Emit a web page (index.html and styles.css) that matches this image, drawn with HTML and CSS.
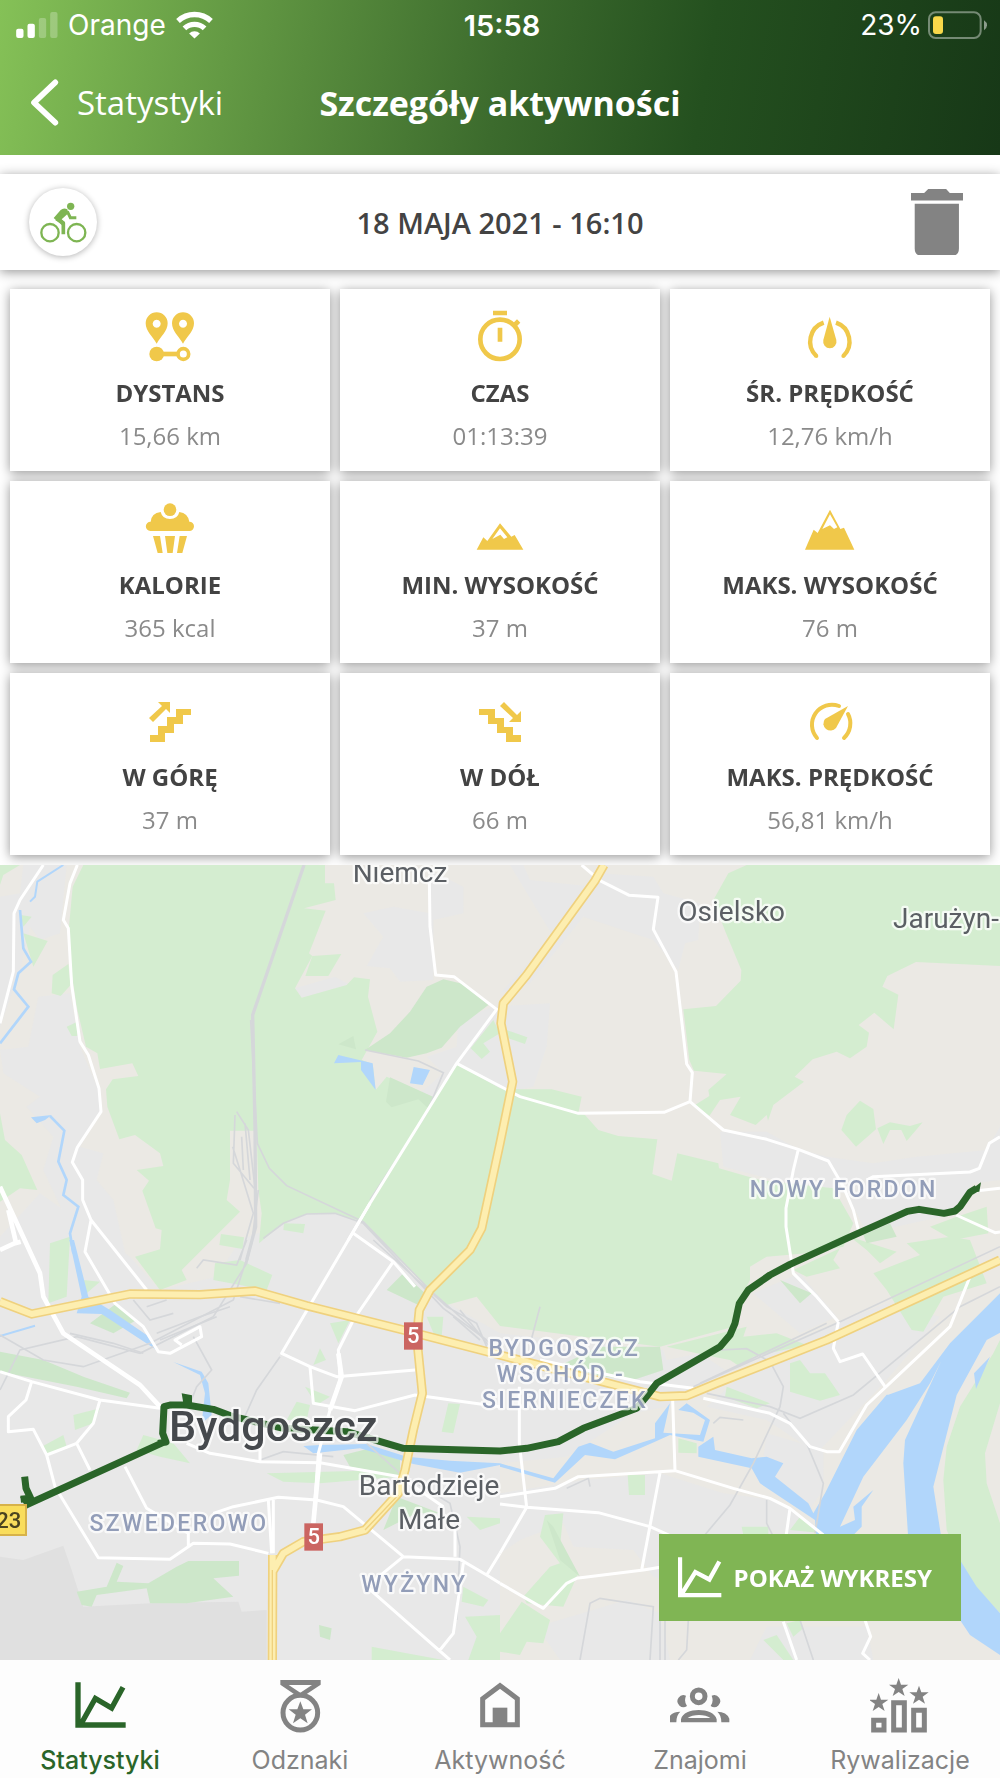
FILE: index.html
```html
<!DOCTYPE html>
<html lang="pl">
<head>
	<meta charset="UTF-8">
	<meta name="viewport" content="width=device-width, initial-scale=1">
	<title>Szczegóły aktywności</title>
	<link rel="stylesheet" href="styles.css">
</head>
<body>
	<header class="header">
		<div class="status">
			<div class="status_left">
				<svg class="signal" viewBox="48 33 125 78"><g fill="#fff"><rect x="48" y="83" width="22" height="28" rx="6"/><rect x="82" y="68" width="22" height="43" rx="6"/><g opacity=".25"><rect x="116" y="51" width="22" height="60" rx="6"/><rect x="150" y="33" width="22" height="78" rx="6"/></g></g></svg>
				<span>Orange</span>
				<svg class="wifi" viewBox="532 30 110 82"><g fill="none" stroke="#fff" stroke-width="16"><path d="M538 59A72 72 0 0 1 636 59"/><path d="M557 81A44 44 0 0 1 617 81"/></g><path fill="#fff" d="M587 111L571 96A23 23 0 0 1 603 96Z"/></svg>
			</div>
			<div class="status_time">15:58</div>
			<div class="status_right">
				<span>23%</span>
				<svg class="battery" viewBox="1284 30 180 84"><rect x="1287" y="34" width="155" height="77" rx="20" fill="none" stroke="#fff" stroke-opacity=".4" stroke-width="6"/><rect x="1299" y="46" width="30" height="53" rx="9" fill="#f8d84a"/><path d="M1452 58Q1461 64 1461 73T1452 88Z" fill="#fff" opacity=".5"/></svg>
			</div>
		</div>
		<div class="navbar">
			<a class="back" href="#">
				<svg class="back_icon" viewBox="90 234 87 141"><path d="M166 244L102 305L166 365" fill="none" stroke="#fff" stroke-width="17" stroke-linecap="round" stroke-linejoin="round"/></svg>
				<span>Statystyki</span>
			</a>
			<h1 class="title">Szczegóły aktywności</h1>
		</div>
	</header>

	<main class="main">
		<div class="summary">
			<div class="date_bar">
				<div class="sport">
					<svg viewBox="86 564 204 204"><g fill="none" stroke="#7eb553"><circle cx="149" cy="698" r="26" stroke-width="7"/><circle cx="229" cy="698" r="26" stroke-width="7"/><path d="M189 703V669L168 656" stroke-width="11" stroke-linejoin="round"/><path d="M201 634L210 653H228" stroke-width="9"/></g><path fill="#7eb553" d="M160 654L181 630Q190 622 201 628L204 640L184 658L194 667L185 676Z"/><circle cx="211" cy="619" r="11" fill="#7eb553"/></svg>
				</div>
				<h2 class="date">18 MAJA 2021 - 16:10</h2>
				<button class="delete" type="button" aria-label="Usuń">
					<svg viewBox="1235 568 154 198"><path fill="#838383" d="M1235 580H1274L1286 568H1339L1350 580H1389V602H1235ZM1246 612H1377V744Q1377 766 1355 766H1268Q1246 766 1246 744Z"/></svg>
				</button>
			</div>

			<!-- statystyki aktywności -->
			<ul class="stats">
				<li class="card">
					<svg class="card_icon" viewBox="429 94 162 162"><path fill-rule="evenodd" d="M470 195C458 173 437 158 437 134A33 33 0 0 1 503 134C503 158 482 173 470 195ZM470 123a12 12 0 1 0 .1 0ZM549 195C537 173 516 158 516 134A33 33 0 0 1 582 134C582 158 561 173 549 195ZM549 123a12 12 0 1 0 .1 0Z"/><circle cx="470" cy="226" r="22"/><path d="M485 219H535V233H485Z"/><circle cx="550" cy="226" r="16" fill="#fff" stroke="#f0c84a" stroke-width="11"/></svg>
					<h3>DYSTANS</h3>
					<p>15,66 km</p>
				</li>
				<li class="card">
					<svg class="card_icon" viewBox="1419 94 162 162"><circle cx="1500" cy="182" r="59" fill="none" stroke="#f0c84a" stroke-width="14"/><path d="M1479 96H1521V110H1479ZM1493 147H1507V189H1493ZM1539 134L1551 122L1561 132L1549 144Z"/></svg>
					<h3>CZAS</h3>
					<p>01:13:39</p>
				</li>
				<li class="card">
					<svg class="card_icon" viewBox="909 94 162 162"><g fill="none" stroke="#f0c84a" stroke-width="13"><path d="M949 232A60 60 0 0 1 971 132M1008 132A60 60 0 0 1 1030 232"/></g><circle cx="949" cy="232" r="6"/><circle cx="1030" cy="232" r="6"/><path d="M989 114L1009 184A20 20 0 1 1 970 184Z"/></svg>
					<h3>ŚR. PRĘDKOŚĆ</h3>
					<p>12,76 km/h</p>
				</li>
				<li class="card">
					<svg class="card_icon" viewBox="429 669 162 162"><circle cx="510" cy="692" r="19"/><path d="M451 756A14 14 0 0 1 452 728Q454 703 482 699Q487 720 510 720T538 699Q564 703 568 728A14 14 0 0 1 568 756ZM459 771H480L488 822H473ZM495 771H525L518 822H502ZM539 771H561L547 822H531Z"/></svg>
					<h3>KALORIE</h3>
					<p>365 kcal</p>
				</li>
				<li class="card">
					<svg class="card_icon" viewBox="1419 669 162 162"><path fill-rule="evenodd" d="M1430 812L1450 775L1462 786L1500 733L1534 773L1544 768L1570 812ZM1477 780L1501 767L1512 780L1522 775L1500 748Z"/></svg>
					<h3>MIN. WYSOKOŚĆ</h3>
					<p>37 m</p>
				</li>
				<li class="card">
					<svg class="card_icon" viewBox="909 669 162 162"><path fill-rule="evenodd" d="M915 812L941 752L953 762L990 692L1021 750L1032 746L1063 812ZM967 750L990 739L1002 750L1012 745L990 706Z"/></svg>
					<h3>MAKS. WYSOKOŚĆ</h3>
					<p>76 m</p>
				</li>
				<li class="card">
					<svg class="card_icon" viewBox="143 694 54 54"><path d="M150 735H158V726H167V717H176V709H191V715H183V724H174V733H165V742H150ZM158 702H170V713L166 709L153 722L149 718L162 706Z"/></svg>
					<h3>W GÓRĘ</h3>
					<p>37 m</p>
				</li>
				<li class="card">
					<svg class="card_icon" viewBox="473 694 54 54"><path d="M479 709H495V718H504V727H513V735H521V742H506V733H497V724H488V715H479ZM504 702L517 715L521 711V722H509L513 718L500 706Z"/></svg>
					<h3>W DÓŁ</h3>
					<p>66 m</p>
				</li>
				<li class="card">
					<svg class="card_icon" viewBox="803 694 54 54"><path d="M817 738A20 20 0 0 1 839 706M848 714A20 20 0 0 1 844 738" fill="none" stroke="#f0c84a" stroke-width="4" stroke-linecap="round"/><path d="M848 706L836 728A7 7 0 1 1 825 719Z"/></svg>
					<h3>MAKS. PRĘDKOŚĆ</h3>
					<p>56,81 km/h</p>
				</li>
			</ul>
		</div>

		<!-- mapa trasy -->
		<div class="map">
			<svg class="map_svg" viewBox="0 15 3000 2385" preserveAspectRatio="xMidYMid slice" role="img" aria-label="Mapa trasy">
				<rect width="3000" height="2400" fill="#ebe9e4"/>
				<!-- zabudowa -->
				<g fill="#e8e8e8">
					<path d="M0 110L60 100L70 15H200L180 220L120 240L90 200L60 330L0 500ZM115 410L210 400L240 560L300 700L300 760L240 860L310 880L290 960L340 1020L380 1200H170L200 1080L130 930L160 830L80 740L120 710L10 640L0 570L85 560Z"/>
					<path d="M1090 160L1180 140L1290 160V30L1390 80L1390 160L1300 180V360L1200 365L1170 325L1100 318L1150 230ZM885 385L1005 350L1050 375L905 413ZM1375 480L1480 440L1650 430L1640 560L1600 680L1500 700L1300 720L1260 700L1330 640L1280 590L1370 560ZM1530 15H1570L1590 60L1780 80L1790 40L1960 50L1990 100L2100 130L2095 240L2055 250L2035 330L1960 240L1930 230L1750 170L1590 370L1500 400L1660 230Z"/>
					<path d="M2160 815H2300L2390 865L2480 890L2620 910L2750 890L2960 870L3000 800V960L2920 970L2870 1060L2600 1120L2540 1000L2400 980L2170 920Z"/>
					<path d="M0 1130L120 1000L390 1190L480 1290L650 1250L720 1140L800 1110L920 1062H1030L1100 1090L1290 1300L1500 1420L1990 1470L2000 1500L2100 1480L2220 1560L2000 1640L1900 1660L1700 1790L1500 1810V2400H0Z"/>
					<path d="M1500 1900L1750 1860L1980 1840L2170 1900L2320 1920L2440 1990V2100L2250 2050L2060 2180L1960 2150L1900 2070L1720 2060L1690 1990L1560 2040L1500 2080ZM2300 1720L2470 1770L2470 1890L2420 1960L2280 1870ZM2310 1470L2660 1330L2820 1370L2660 1560L2450 1780L2300 1680L2120 1640ZM2260 1300L2400 1240L2510 1370L2400 1420ZM1610 2300L1880 2220L1980 2260L2010 2400H1680ZM2300 2300H2600L2620 2400H2250Z"/>
				</g>
				<path fill="#e0e0e0" d="M0 2090L70 2100L190 2057L215 2130L250 2240L480 2228L715 2225L725 2255L800 2250V2400H0Z"/>
				<!-- lasy -->
				<g fill="#d4edd0">
					<path d="M250 15H975V70H1002L1007 120L912 145L977 152L927 280L937 288L885 385L905 413L1040 375L1062 352L1110 358L1104 410L1132 515L1085 600L1118 612L1127 690L1160 650L1300 712L1370 612L1500 685L1560 688H1655L1745 710L1735 760L1755 765L1795 810L1855 828L1972 838L1957 942L2015 962L2032 880L2155 910L2157 925L2280 960L2500 985L2560 1090L2530 1160L2420 1180L2300 1190L2250 1220L2250 1260L2215 1330L2200 1400L1980 1460L1500 1398L1430 1310L1340 1335L1290 1290L1090 1085L1000 1060L920 1062L850 1090L777 1150L785 1060L775 990L770 812H690V960L680 1020L720 1055L575 1200L545 1230L560 1260L480 1290L405 1190L480 1168L485 1110L467 1105L427 992L447 962L410 930L490 918L480 880L405 825L358 838L322 740L318 688L338 658L415 648L397 610L300 627L292 580L258 560L230 440L215 340L207 200L218 80Z"/>
					<path d="M2240 15H3000V318L2748 306L2662 348L2647 380L2695 404L2681 508L2623 458L2576 495L2607 518L2600 560L2550 595L2510 575L2438 598L2384 650L2412 665L2320 735L2304 782L2300 765L2267 795L2190 765L2222 710L2160 720L2128 768L2085 735L2128 708L2125 690L2180 642L2082 632L2068 600L2050 448L2148 438L2222 362L2224 330L2175 212L2140 120L2185 40Z"/>
					<path d="M937 288L1024 282L985 348H916ZM2524 810L2540 765L2580 722L2620 747L2628 808L2568 860ZM2632 805L2670 787L2730 798L2768 787L2720 843L2704 810H2670L2650 852ZM0 15H60L10 45L0 75ZM70 220L143 243L100 320ZM62 165L95 170L70 200ZM205 312L212 375L182 408L155 400L158 345ZM200 500L232 485V528H215ZM0 760L15 840L65 885L112 990L60 985L0 1025ZM1412 565L1480 480L1500 520L1450 550L1470 575L1445 597ZM1520 510L1582 532L1575 552L1525 535ZM852 1090L915 1092L910 1120L850 1110ZM663 1122L732 1132L728 1167L658 1155Z"/>
					<path d="M150 1150L210 1130L200 1310L145 1330ZM645 1210L720 1200L817 1245L800 1290L640 1260ZM250 1260L300 1265L260 1300ZM990 1390L1050 1380L1015 1450ZM960 1465L978 1500L940 1515ZM915 1580L990 1610L950 1635ZM1345 1630L1380 1632L1360 1720L1325 1715ZM890 1625L930 1635L920 1680H860ZM220 1665L300 1645L280 1690L225 1710ZM125 1760L190 1725L200 1760L140 1790ZM430 1725L520 1750L570 1810L480 1790L410 1770ZM800 1840L1180 1830L1200 1850L960 1870L850 1865ZM1280 1370H1330L1325 1430H1305ZM1500 1975L1400 1970L1440 2010L1500 1990ZM1115 2360L1330 2400H1115ZM1395 2270L1500 2265V2400H1405L1430 2330ZM1390 2180L1465 2220L1450 2240L1385 2225Z"/>
					<path d="M2000 1460L2240 1400L2230 1430L2330 1420L2420 1455L2260 1490L2220 1520L2190 1500L2140 1490ZM2620 1240L2760 1185L2720 1150L2850 1130L2910 1140L2960 1270L2830 1310L2770 1415L2735 1410L2660 1290ZM2370 1510L2400 1500L2430 1540L2475 1540L2520 1605L2460 1622L2370 1595ZM2180 1580L2310 1630L2270 1645L2175 1610ZM2380 1230L2520 1165L2500 1200L2520 1225L2420 1250ZM2035 1735L2090 1750V1780L2035 1778ZM1883 1845H1935V1905H1887ZM2225 2000H2305V2025H2230ZM2370 2010L2400 1970L2470 2020ZM1635 1965L1690 1960L1680 2060L1735 2140L1690 2240L1580 2230L1570 2210L1650 2120L1680 2110L1620 2030ZM1500 2320L1565 2225L1650 2280L1630 2350L1580 2345L1560 2385L1500 2375ZM2290 2340L2330 2325L2380 2400H2350ZM2360 2290L2400 2280L2410 2305L2380 2330ZM2550 1130L2690 1175L2640 1210L2600 1170ZM2870 1070L2960 1040L2965 1120L2860 1140L2790 1100Z"/>
					<path d="M3000 1440V1630L2955 1780L2960 1870L3000 1990V2260L2900 2150L2840 2010L2830 1860L2840 1760L2880 1640L2980 1480Z"/>
				</g>
				<g fill="#cde7ca">
					<path d="M1095 570L1170 520L1230 455L1280 380L1330 358L1390 372L1465 435L1380 500L1325 563L1280 580L1220 593ZM1170 652L1302 712L1285 745L1255 718L1175 742L1158 725ZM1015 553L1060 528L1068 568Z"/>
					<path d="M0 1475L130 1500L250 1550L390 1598L380 1615L230 1580L0 1535ZM1160 1290L1210 1240L1275 1300L1255 1335ZM230 2195L320 2180L350 2108L370 2118L350 2165L445 2170L530 2120L565 2103H717V2147L640 2155L700 2210L560 2230H450L440 2185L290 2205L275 2240L245 2235ZM1030 1785L1110 1765L1200 1800V1850L1050 1820ZM1190 1910L1320 1960L1250 1960L1150 2010ZM957 2295L995 2305L990 2340L960 2330ZM270 1390L350 1330L410 1380L340 1420Z"/>
					<path d="M1800 1460L1980 1460L1990 1530L1900 1560L1650 1530ZM2340 1260L2435 1300L2400 1330ZM1640 1980L1660 2000L1740 2150L1680 2100ZM2590 1125L2670 1090L2690 1130L2600 1150Z"/>
				</g>
				<!-- woda -->
				<g fill="#b1d6fb">
					<path d="M3000 1300L2850 1450L2760 1570L2665 1604L2660 1604L2570 1710L2475 1900L2440 1960L2425 1930L2325 1850L2350 1810L2300 1790L2255 1795L2145 1770L2140 1730L2095 1760V1790L2255 1825L2280 1870L2445 1980L2450 2040H2545L2585 2000V1940L2620 1890L2560 1940L2565 1980L2520 2000L2590 1850L2720 1680L2790 1570L2825 1500L2715 1740L2710 1810L2725 2040H2825L2800 1880L2870 1605L2960 1440L3000 1418ZM2730 1617L2610 1790L2680 1700ZM2970 1490L2922 1540L2928 1587ZM2880 2100L2930 2180L3000 2260V2385L2910 2325L2870 2265Z"/>
					<path d="M2010 1630L1965 1690V1735L1840 1775L1770 1748L1735 1760L1660 1855L1500 1810V1820L1665 1868L1755 1785L1845 1798L1965 1745L2010 1725L2110 1745L2130 1680L2060 1630L2035 1650L2080 1658L2115 1680L2100 1725L1990 1718Z"/>
					<path d="M910 1758L940 1780L1080 1765L1240 1812L1380 1838L1500 1815V1810L1350 1802L1220 1790L1100 1752L960 1755ZM1002 610L1015 585L1118 610L1127 690L1083 630V606ZM1241 621L1290 630L1268 675L1230 670ZM93 772L155 765L135 780L110 790ZM208 1140L245 1310L230 1360L305 1362L470 1470L440 1425L330 1350L265 1310L222 1140ZM520 1506L600 1545L615 1600L605 1690L635 1665L625 1570L605 1535Z"/>
				</g>
				<g fill="none" stroke="#b1d6fb">
					<path stroke-width="6" d="M190 15L112 65L105 110L90 125M0 1428L105 1397"/>
					<path stroke-width="8" d="M60 150L70 265L93 305L55 340L42 388L85 440L0 550M150 768L193 812L175 905L200 960L190 1005L235 1040L210 1120L220 1180"/>
				</g>
				<!-- tory kolejowe -->
				<g fill="none" stroke="#d5d7da" stroke-width="5">
					<path stroke-width="10" d="M912 15L758 465L765 800L767 1100L740 1200"/>
					<path d="M752 480L772 850L808 925L860 977L1090 1085L1290 1290L1470 1450M705 765L700 910L762 985M710 755L745 810L765 985M725 830L730 930M735 790L750 960M698 860L720 930L760 1060L720 1200M775 990L755 1150L700 1320L450 1450L250 1520L130 1500L0 1425M765 1100L740 1210L640 1370L420 1480L230 1430L60 1470L0 1590M790 1135L850 1090L920 1062L1005 1060L1090 1090L1330 1345L1460 1440M1120 1140L1340 1340L1430 1390L1460 1460M590 1225L610 1200L710 1215L740 1140M1095 570L1255 603L1330 638L1280 760L1110 1020M840 1490L770 1590L730 1680M580 1430L635 1530L590 1580L570 1630M780 1800L850 1775L1000 1790"/>
					<path d="M400 1320L450 1380L520 1360M440 1340L500 1320M470 1420L600 1370L690 1340M480 1440L650 1370M210 1420L340 1450L430 1480M720 1310L840 1330M1360 1370L1440 1440M1380 1350L1465 1455"/>
					<path d="M1620 1340L1595 1435M2080 1580L2520 1385L3000 1160M2100 1570L2480 1390M2120 1600L2310 1640L2400 1675L2560 1605L2880 1340L3000 1280M2160 1470L2240 1466L2310 1505L2350 1580L2340 1640L2260 1810L2190 1935L2110 2030M2350 1660L2420 1750L2470 1870L2445 2020M2300 1920V1990L2320 2030M2140 1690L2160 1672L2230 1680M1740 2400L1770 2230L1800 2215L1960 2240L1950 2400M1980 2280V2400M1995 2280V2400M2065 2280L2060 2370L2035 2400M2400 2280L2440 2400M1700 1885L1765 1855L1770 1880M1100 1750L1200 1840L1350 1930L1380 2060L1370 2280"/>
				</g>
				<!-- drogi lokalne -->
				<g fill="none" stroke="#fff" stroke-width="9" stroke-linejoin="round">
					<path d="M130 15L60 120L42 160L40 335L0 490M232 15L210 70L190 180L205 205L215 375L240 545L265 585L297 685L303 755L232 862L217 907L248 960V1020L273 1080L440 1290M273 1080L255 1175L345 1330L430 1400L475 1475L510 1480L605 1430L600 1400L525 1440L545 1455M1288 60L1290 200L1307 345L1362 350L1490 448L1370 610L1110 1030L845 1480L930 1520L1010 1550L1245 1530M1370 610L1560 710L1735 760L1992 757L2070 725L2170 810L2300 838L2395 868L2485 903L2530 980L2560 1050L2575 1110M2395 868L2380 930L2358 1045V1100L2380 1240L2450 1310L2515 1385M1745 15L1800 62L1888 106L1974 112L1960 208L2028 335L2060 612L2077 638L2070 725M2600 960L2620 950L2910 936L2938 925L2968 850L3000 830M2925 993L3000 985M2868 1065L2985 1118L3000 1116"/>
					<path d="M0 1535L95 1565L300 1620L480 1645M95 1565L78 1620L25 1670V1715L100 1708L140 1785L230 1750L280 1690L300 1620M140 1785L165 1880L295 2093L510 2098L580 2050L690 2052L805 2080M230 1750L270 1830M375 1820L440 1945L565 2020V2060M1045 1140L1110 1030M1180 1205L1060 1380L1015 1470L1020 1560L990 1650L955 1780L940 1990M1060 1120L1180 1205L1245 1280M930 1520L940 1630L1065 1652L1245 1605L1500 1640M560 1750L630 1780L780 1805L960 1808L1200 1850L1330 1940M780 1805V1760M640 1960L700 1940L835 1912L950 1920L1030 1940L1210 2090L1380 2098L1460 2145L1500 2170M820 1920V2080M805 1920L815 2080M1210 2090L1100 2180L1350 2400M1365 2000V2090M1390 2110L1360 2320L1320 2370M1460 2145L1500 2080"/>
					<path d="M1500 1910L1665 1885L1735 1850L2025 1832L2200 1885L2310 1915L2370 1945L2470 2025M2025 1832L2018 1620M1500 1932L1580 1942L1795 1958L1950 2000L2040 2040M1580 1942L1500 2080M1558 1580V1750L1580 1942M1980 1838L1925 2130M1500 2170L1630 2245L1700 2170L1730 2155L1930 2130L1990 2120M2370 1945L2358 2030M2110 1615L2310 1660L2370 1690L2430 1760L2480 1775H2518L2600 1635L2850 1400L2910 1250M2515 1385L2500 1465L2520 1505L2588 1482L2655 1580M1620 1500L1920 1565L2080 1585M2350 2285L2390 2400M2595 2280L2612 2330L2588 2380L2610 2400"/>
					<path stroke-width="14" d="M0 980L60 1110L120 1240L130 1310L190 1420L420 1575L480 1640M25 1050L48 1148L0 1170M45 1150L62 1145M1015 1480L1025 1550L990 1650M960 1780L940 1990"/>
				</g>
				<!-- drogi krajowe -->
				<g fill="none" stroke-linejoin="round">
					<path stroke="#efd17e" stroke-width="28" d="M1812 15L1785 62L1580 345L1510 430L1503 490L1538 665L1500 850L1445 1105L1410 1170L1290 1290L1258 1350L1250 1430L1267 1600L1240 1710L1215 1830L1195 1900L1095 2010L1020 2030L910 2045L850 2080L818 2135L817 2400M818 2140V2085M0 1325L95 1362L390 1302L600 1304L765 1293L920 1337L1210 1410L1500 1485L1980 1610L2060 1607L2150 1570L2480 1440L3000 1200"/>
					<path stroke="#fdeeb0" stroke-width="18" d="M1812 15L1785 62L1580 345L1510 430L1503 490L1538 665L1500 850L1445 1105L1410 1170L1290 1290L1258 1350L1250 1430L1267 1600L1240 1710L1215 1830L1195 1900L1095 2010L1020 2030L910 2045L850 2080L818 2135L817 2400M818 2140V2085M0 1325L95 1362L390 1302L600 1304L765 1293L920 1337L1210 1410L1500 1485L1980 1610L2060 1607L2150 1570L2480 1440L3000 1200"/>
					<path stroke="#efd17e" stroke-width="4" d="M817 2130V2400M1195 1905L1095 2010"/>
				</g>
				<!-- przebyta trasa -->
				<path fill="none" stroke="#2a6529" stroke-width="21" stroke-linejoin="round" d="M74 1850L78 1885L92 1915L62 1918M78 1935L490 1747M474 1750L498 1746L488 1720L492 1640L510 1635H560L640 1648L700 1670L850 1705L1040 1715L1210 1765L1500 1773L1580 1765L1675 1745L1750 1705L1910 1645L1935 1615L1970 1570L2160 1460L2190 1425L2205 1390L2218 1330L2245 1290L2310 1245L2370 1213L2540 1135L2722 1054L2757 1048L2832 1060L2865 1053L2880 1040L2910 997L2930 985"/>
				<path fill="#2a6529" d="M545 1600L576 1606V1642H552ZM2905 995L2943 967L2938 995ZM60 1910L104 1915L80 1948Z"/>
				<g class="labels">
					<g class="town">
						<text x="1200" y="65">Niemcz</text>
						<text x="2195" y="183">Osielsko</text>
						<text x="2838" y="203">Jarużyn-</text>
						<text x="1287" y="1905">Bartodzieje</text>
						<text x="1287" y="2007">Małe</text>
					</g>
					<g class="district">
						<text x="2531" y="1010">NOWY FORDON</text>
						<text x="1693" y="1489">BYDGOSZCZ</text>
						<text x="1683" y="1567">WSCHÓD -</text>
						<text x="1695" y="1645">SIERNIECZEK</text>
						<text x="537" y="2012">SZWEDEROWO</text>
						<text x="1243" y="2195">WYŻYNY</text>
					</g>
					<text class="city" x="820" y="1742">Bydgoszcz</text>
				</g>
				<g class="shields">
					<rect x="1212" y="1387" width="56" height="82" fill="#cb6561"/>
					<text x="1240" y="1450" fill="#fff">5</text>
					<rect x="913" y="1990" width="56" height="82" fill="#cb6561"/>
					<text x="941" y="2053" fill="#fff">5</text>
					<rect x="-60" y="1935" width="138" height="90" fill="#f9dd5c" stroke="#d7b24a" stroke-width="6"/>
					<text x="26" y="2003" fill="#4a4320">23</text>
				</g>
			</svg>
			<button class="charts_btn" type="button">
				<svg viewBox="534 953 132 122"><path d="M540 953V1067H664M546 1062L586 998L628 1020L658 966" fill="none" stroke="#fff" stroke-width="13"/></svg>
				POKAŻ WYKRESY
			</button>
		</div>
	</main>

	<nav class="tabs">
		<a class="tab active" href="#">
			<svg viewBox="210 75 180 180"><path d="M234 97V225H377M243 222L286 145L335 174L369 112" fill="none" stroke="currentColor" stroke-width="16"/></svg>
			<span>Statystyki</span>
		</a>
		<a class="tab" href="#">
			<svg viewBox="811 75 180 180"><path fill="currentColor" fill-rule="evenodd" d="M842 90H963V104L920 133H884L842 104ZM867 105L902 128L937 105Z"/><circle cx="902" cy="188" r="52" fill="none" stroke="currentColor" stroke-width="15"/><path fill="currentColor" d="M902 154L911 178H937L916 194L924 220L902 205L880 220L888 194L867 178H893Z"/></svg>
			<span>Odznaki</span>
		</a>
		<a class="tab" href="#">
			<svg viewBox="1410 75 180 180"><path d="M1448 224V146L1500 107L1552 146V224Z" fill="none" stroke="currentColor" stroke-width="15"/><path fill="currentColor" d="M1478 173H1522V228H1478Z"/></svg>
			<span>Aktywność</span>
		</a>
		<a class="tab" href="#">
			<svg viewBox="509 75 180 180"><circle cx="595" cy="139" r="19" fill="none" stroke="currentColor" stroke-width="15"/><path fill="currentColor" fill-rule="evenodd" d="M542 217V208C550 171 640 171 649 208V217ZM562 204H630C616 192 576 192 562 204ZM557 137A18 18 0 1 0 560 168Q550 155 557 137ZM634 137A18 18 0 1 1 631 168Q641 155 634 137ZM504 217V206Q512 185 540 185Q528 195 528 217ZM687 217V206Q679 185 651 185Q663 195 663 217Z"/></svg>
			<span>Znajomi</span>
		</a>
		<a class="tab" href="#">
			<svg viewBox="1110 75 180 180"><g fill="none" stroke="currentColor" stroke-width="15"><path d="M1121 211H1152V240H1121ZM1181 158H1213V240H1181ZM1241 181H1273V240H1241Z"/></g><g fill="currentColor"><path id="star" d="M1196 84L1203 104H1225L1207 117L1214 138L1196 126L1178 138L1185 117L1167 104H1189Z"/><use href="#star" x="-60" y="45"/><use href="#star" x="61" y="23"/></g></svg>
			<span>Rywalizacje</span>
		</a>
	</nav>
</body>
</html>
```
FILE: styles.css
```css
/* reset */
body{margin:0;padding:0;background:#fff;color:#434343;font-family:"Open Sans","Noto Sans",sans-serif;}
ul,li,p,h1,h2,h3{margin:0;padding:0;}
ul{list-style:none;}
a{color:inherit;text-decoration:none;}
button{border:0;font-family:inherit;cursor:pointer;}
svg{display:block;}
*{box-sizing:border-box;}

body{
	display: flex;
	flex-direction: column;
	min-height: 100vh;
}

/* header */
.header{
	color: #fff;
	background: linear-gradient(100deg, #85c157 0%, #3c6b2d 50%, #24501f 70%, #173817 100%);
}

.status{
	display: grid;
	grid-template-columns: 1fr auto 1fr;
	align-items: center;
	height: 50px;
	padding: 0 12px 0 16px;
	font-family: Inter, "Liberation Sans", sans-serif;
	font-size: 28px;
}

.status_left,
.status_right{
	display: flex;
	align-items: center;
	gap: 10px;
}

.status_right{
	justify-content: flex-end;
	gap: 6px;
}

.status_time{
	font-size: 29px;
	font-weight: 600;
}

.signal{
	width: 42px;
	height: 26px;
}

.wifi{
	width: 37px;
	height: 28px;
}

.battery{
	width: 60px;
	height: 28px;
}

.navbar{
	display: grid;
	grid-template-columns: 1fr auto 1fr;
	align-items: center;
	height: 105px;
	padding: 0 30px;
}

.back{
	display: flex;
	align-items: center;
	gap: 18px;
	font-size: 33px;
	font-weight: 400;
}

.back_icon{
	width: 29px;
	height: 47px;
}

.title{
	font-size: 34px;
	font-weight: 700;
}

/* content */
.main{
	display: flex;
	flex-direction: column;
	flex: 1;
}

.summary{
	padding: 19px 0 10px;
	filter: drop-shadow(0 2px 6px rgba(0,0,0,.42));
}

.date_bar{
	display: grid;
	grid-template-columns: 1fr auto 1fr;
	align-items: center;
	height: 96px;
	padding: 0 29px;
	background: #fff;
}

.sport{
	width: 68px;
	height: 68px;
	border-radius: 50%;
	background: #fff;
	box-shadow: 0 1px 6px rgba(0,0,0,.3);
}

.date{
	font-size: 29px;
	font-weight: 600;
}

.delete{
	justify-self: end;
	width: 68px;
	padding: 0 8px;
	background: none;
}

.stats{
	display: grid;
	grid-template-columns: repeat(3, 1fr);
	gap: 10px;
	padding: 19px 10px 0;
}

.card{
	height: 182px;
	padding-top: 21px;
	background: #fff;
	text-align: center;
}

.card_icon{
	width: 54px;
	height: 54px;
	margin: 0 auto 7px;
	fill: #f0c84a;
}

.card h3{
	font-size: 24px;
	font-weight: 700;
	line-height: 44px;
}

.card p{
	color: #8a8a8a;
	font-size: 24px;
	font-weight: 400;
	line-height: 42px;
}

/* map */
.map{
	position: relative;
	flex: 1;
	min-height: 400px;
	overflow: hidden;
}

.map_svg{
	position: absolute;
	width: 100%;
	height: 100%;
}

.labels{
	font-family: Roboto, "Liberation Sans", sans-serif;
	text-anchor: middle;
	paint-order: stroke;
	stroke: rgba(255,255,255,.75);
	stroke-width: 14px;
	stroke-linejoin: round;
}

.town{
	fill: #5b5f64;
	font-size: 84px;
}

.district{
	fill: #929db8;
	font-size: 69px;
	font-weight: 500;
	letter-spacing: 7px;
}

.city{
	fill: #46494d;
	font-size: 129px;
	font-weight: 500;
}

.shields{
	font-family: Roboto, "Liberation Sans", sans-serif;
	font-size: 66px;
	font-weight: 500;
	text-anchor: middle;
}

.charts_btn{
	position: absolute;
	right: 39px;
	bottom: 39px;
	display: flex;
	align-items: center;
	gap: 12px;
	height: 87px;
	padding: 0 29px 0 19px;
	background: #80b554;
	color: #fff;
	font-size: 24px;
	font-weight: 700;
}

.charts_btn svg{
	width: 44px;
	height: 41px;
}

/* bottom tabs */
.tabs{
	display: grid;
	grid-template-columns: repeat(5, 1fr);
	background: #fdfdfd;
	color: #838383;
	font-family: Inter, "Liberation Sans", sans-serif;
	font-size: 25px;
	line-height: 36px;
}

.tab{
	display: flex;
	flex-direction: column;
	align-items: center;
	gap: 7px;
	padding-top: 15px;
}

.tab svg{
	width: 60px;
	height: 60px;
}

.tab.active{
	color: #2a6529;
	font-weight: 500;
}
```
